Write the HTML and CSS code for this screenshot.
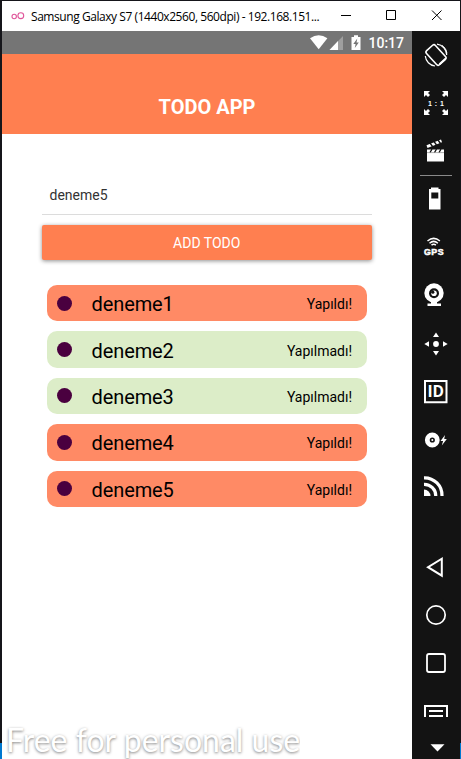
FILE: index.html
```html
<!DOCTYPE html>
<html lang="tr">
<head>
<meta charset="utf-8">
<title>Todo App</title>
<link rel="stylesheet" href="styles.css">
</head>
<body>
<div class="window">
  <div class="titlebar">
    <svg class="app-icon" width="14" height="8" viewBox="0 0 14 8"><g fill="none" stroke="#e0559a" stroke-width="1.1"><circle cx="3.2" cy="4.5" r="2.2"/><circle cx="9.8" cy="3.7" r="2.9"/></g></svg>
    <span class="caption">Samsung Galaxy S7 (1440x2560, 560dpi) - 192.168.151...</span>
    <svg class="controls" width="140" height="30" viewBox="0 0 140 30"><g fill="none" stroke="#000"><path d="M21 14.500h10M66.500 9.500h9v9h-9zM112 9.500l9.500 9.500M121.500 9.500L112 19"/></g></svg>
  </div>
  <div class="body">
    <main class="phone">
      <div class="status">
        <svg width="54" height="23" viewBox="0 0 54 23"><path fill="#fff" d="M0 7.200Q8.700 1.500 17.400 7.200L8.700 18.300z"/><path fill="#9f9f9f" d="M33 5v14H19.500z"/><path fill="#fff" d="M28 10v9h-8.500z"/><path fill="#fff" d="M41.500 6h2.500V4.300h4V6h2.500v13h-9z"/><path fill="#757575" d="M47.300 7.500L43.300 13h2.300l-.8 4 4-5.600h-2.300z"/></svg>
        <span class="clock">10:17</span>
      </div>
      <header class="header">TODO APP</header>
      <section class="content">
        <div class="input">deneme5</div>
        <div class="button">ADD TODO</div>
        <ul class="list">
          <li class="item done"><i class="dot"></i><span class="name">deneme1</span><span class="state">Yapıldı!</span></li>
          <li class="item"><i class="dot"></i><span class="name">deneme2</span><span class="state">Yapılmadı!</span></li>
          <li class="item"><i class="dot"></i><span class="name">deneme3</span><span class="state">Yapılmadı!</span></li>
          <li class="item done"><i class="dot"></i><span class="name">deneme4</span><span class="state">Yapıldı!</span></li>
          <li class="item done"><i class="dot"></i><span class="name">deneme5</span><span class="state">Yapıldı!</span></li>
        </ul>
      </section>
    </main>
    <aside class="tools">
      <svg viewBox="0 0 48 48"><g fill="none" stroke="#fff"><rect x="-6" y="-9.500" width="12" height="19" rx="2" stroke-width="1.600" transform="translate(24 24) rotate(-42)"/><path stroke-width="2" d="M27.500 33.300l6-5.500"/><path stroke-width="1.200" d="M25 13.200a11 11 0 0 1 9.700 10.800M13.300 25a11 11 0 0 0 9.700 10"/><path stroke-width="1" d="M30 14.300a11 11 0 0 1 5 8"/></g></svg>
      <svg viewBox="0 0 48 48"><path fill="#fff" d="M12 12h6l-2 2 2 2-2 2-2-2-2 2zM36 12h-6l2 2-2 2 2 2 2-2 2 2zM12 36h6l-2-2 2-2-2-2-2 2-2-2zM36 36h-6l2-2-2-2 2-2 2 2 2-2z"/><text class="ratio" x="24.200" y="26.700" text-anchor="middle">1 : 1</text></svg>
      <svg viewBox="0 0 48 48"><path fill="#fff" d="M15 22.500h17V34.500H15z"/><path fill="#fff" d="M14.500 18.300l14.500-5.800 1 2.700-14.500 5.800z"/><path stroke="#131313" stroke-width="1.300" d="M18 16l2.500 3.500M22 14.500l2.500 3.500M26 13l2.500 3.500M18 25.500l2-3.300M22.500 25.500l2-3.300M27 25.500l2-3.300"/><path stroke="#777" stroke-width=".6" d="M15 25.600h17"/></svg>
      <svg class="ruled" viewBox="0 0 48 48"><path fill="#fff" d="M17 14h2v-1.500h7.500V14H28.500v20.500H17V14z"/><path fill="#131313" d="M19.300 17.500h7v6h-7z"/></svg>
      <svg viewBox="0 0 48 48"><g fill="none" stroke="#fff" stroke-width="1.500"><path d="M15.500 18q6.200-5.200 12.400 0M17.500 20.200q4.200-3.600 8.400 0M19.500 22.200q2.200-1.800 4.400 0"/></g><text class="gps" x="12" y="32" textLength="19.500">GPS</text></svg>
      <svg viewBox="0 0 48 48"><circle cx="22" cy="22" r="9.700" fill="#fff"/><circle cx="22" cy="22.200" r="5" fill="#131313"/><circle cx="22" cy="22.200" r="2.800" fill="#fff"/><circle cx="20.800" cy="21.200" r="1.600" fill="#131313"/><path fill="#fff" d="M19 30h6v2.500h4V35H15.500v-2.500H19z"/></svg>
      <svg viewBox="0 0 48 48"><g fill="#fff"><circle cx="24" cy="25" r="2.900"/><path d="M24 13.500l3 4.500h-6zM24 36.500l3-4.500h-6zM12.300 25l4.700-2.800v5.600zM35.700 25L31 22.200v5.600z"/></g></svg>
      <svg viewBox="0 0 48 48"><path fill="none" stroke="#fff" stroke-width="2" d="M13 14h21.500v21.200H13z"/><text class="id" x="23.800" y="30.300" text-anchor="middle">ID</text></svg>
      <svg viewBox="0 0 48 48"><circle cx="20.300" cy="25" r="5" fill="none" stroke="#fff" stroke-width="4.800"/><circle cx="20.300" cy="25" r="1" fill="#fff"/><path fill="#fff" d="M33 20l-4.500 6h2.600l-1.300 4.500 5-6.500h-2.600z"/></svg>
      <svg viewBox="0 0 48 48"><g fill="none" stroke="#fff" stroke-width="3.200"><path d="M12 14.800A17.500 17.500 0 0 1 30 33M12 21.300A11.500 11.500 0 0 1 23.800 33"/></g><path fill="#fff" d="M12 26.500A6.500 6.500 0 0 1 18.500 33H12z"/></svg>
      <span class="spacer"></span>
      <svg viewBox="0 0 48 48"><path fill="none" stroke="#fff" stroke-width="2" d="M29.800 15.700v17L16 24.200z"/></svg>
      <svg viewBox="0 0 48 48"><circle cx="24" cy="24" r="9.200" fill="none" stroke="#fff" stroke-width="1.700"/></svg>
      <svg viewBox="0 0 48 48"><rect x="15" y="15" width="18" height="18" rx="2" fill="none" stroke="#fff" stroke-width="1.800"/></svg>
      <svg viewBox="0 0 48 48"><path fill="none" stroke="#fff" stroke-width="2" d="M13 30V19h22v11M17 24h14M17 29h14"/></svg>
      <svg class="more" viewBox="0 0 48 24"><path fill="#fff" d="M18.500 9.300h14l-7 7.200z"/></svg>
    </aside>
  </div>
  <div class="watermark">Free for personal use</div>
</div>
</body>
</html>
```
FILE: styles.css
```css
* { box-sizing: border-box; }
body {
  margin: 0;
  height: 759px;
  overflow: hidden;
  padding: 1px 1px 0 2px;
  background: linear-gradient(#15151a 743px, #0078d0 743px);
  font-family: Roboto, sans-serif;
}
.window { position: relative; width: 458px; height: 758px; }
.titlebar {
  display: flex;
  align-items: center;
  height: 30px;
  background: #fff;
  padding-left: 9px;
}
.app-icon { flex: none; margin-right: 6px; }
.caption {
  flex: 1;
  min-width: 0;
  white-space: nowrap;
  font: 12px "Open Sans", sans-serif;
  letter-spacing: -0.44px;
  color: #000;
}
.controls { flex: none; }
.body { display: flex; height: 728px; }
.phone { width: 410px; background: #fff; }
.status {
  display: flex;
  align-items: center;
  justify-content: flex-end;
  gap: 4px;
  height: 23px;
  padding-right: 8px;
  background: #757575;
}
.clock { color: #fff; font-size: 14px; font-weight: 500; line-height: 23px; padding-top: 2px; }
.header {
  height: 80px;
  padding-top: 41px;
  background: #ff7f50;
  color: #fff;
  font-size: 20px;
  font-weight: 700;
  line-height: 24px;
  text-align: center;
}
.content { padding: 41px 40px 0 39.500px; }
.input {
  height: 40px;
  padding: 10px 8px 0;
  border-bottom: 1px solid #dcdcdc;
  color: #333;
  font-size: 14px;
  line-height: 20px;
}
.button {
  height: 34.500px;
  margin-top: 10px;
  border-radius: 2px;
  background: #ff7f50;
  box-shadow: 0 1px 4px rgba(0, 0, 0, .45);
  color: #fff;
  font-size: 14px;
  line-height: 36px;
  text-align: center;
}
.list {
  display: flex;
  flex-direction: column;
  gap: 10px;
  margin: 25.500px 5px 0;
  padding: 0;
  list-style: none;
}
.item {
  display: flex;
  align-items: center;
  height: 36.400px;
  padding: 0 15px 0 10px;
  border-radius: 10px;
  background: #dcedc8;
  color: #000;
}
.done { background: #ff8a65; }
.dot { width: 15px; height: 15px; border-radius: 50%; background: #4a003f; }
.name { flex: 1; margin-left: 20px; font-size: 20px; letter-spacing: -0.1px; padding-top: 2px; }
.state { font-size: 14px; padding-top: 2px; }
.tools { display: flex; flex-direction: column; width: 48px; background: #131313; }
.tools svg { flex: none; display: block; width: 48px; height: 48px; }
.tools .more { height: 24px; }
.ruled { background: linear-gradient(#8a8a8a, #8a8a8a) 8px 0 / 32px 1px no-repeat; }
.spacer { flex: none; height: 32px; }
.tools text { fill: #fff; }
.ratio { font: 700 7px "Liberation Sans", sans-serif; letter-spacing: .5px; }
.gps { font: 700 8.800px "Liberation Sans", sans-serif; stroke: #fff; stroke-width: .5px; }
.id { font: 700 15.500px "Open Sans", sans-serif; }
.watermark {
  position: absolute;
  left: 4px;
  top: 719px;
  height: 39px;
  overflow: hidden;
  white-space: nowrap;
  color: #fff;
  font: 32px/40px Lato, sans-serif;
  text-shadow: 0 1px 3px rgba(0, 0, 0, .5);
}
```
